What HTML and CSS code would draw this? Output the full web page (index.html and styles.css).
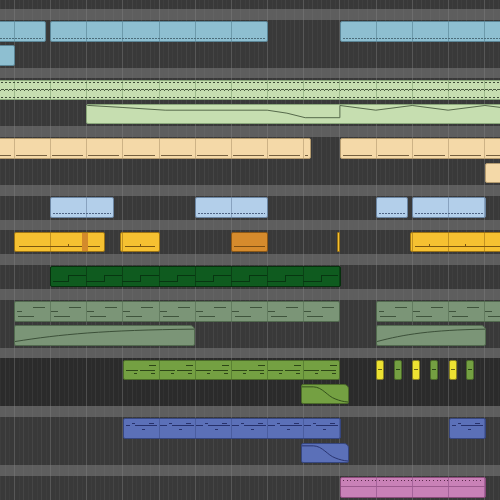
FILE: index.html
```html
<!DOCTYPE html>
<html>
<head>
<meta charset="utf-8">
<link rel="stylesheet" href="styles.css">
</head>
<body>
<div class="arr">
  <div class="top"></div>
  <div class="band"></div>
  <div class="lane">
    <div class="clip c-a" style="margin-left:-6px;width:52px"><i></i></div>
    <div class="clip c-a" style="margin-left:50px;width:218px"><i></i></div>
    <div class="clip c-a" style="margin-left:340px;width:166px"><i></i></div>
  </div>
  <div class="lane">
    <div class="clip c-a" style="margin-left:-6px;width:21px"></div>
  </div>
  <div class="band"></div>
  <div class="lane">
    <div class="clip c-b" style="margin-left:-6px;width:512px"><i class="n1"></i><i class="n2"></i><i class="n3"></i></div>
  </div>
  <div class="lane">
    <div class="clip auto c-b" style="margin-left:86px;width:420px">
      <svg viewBox="0 0 100 100" preserveAspectRatio="none"><path d="M0,2 L8.6,13.5 L18.7,28 L43.1,28 Q48,40 52.2,68.6 L60.5,68.6 L60.5,2.7 L69.1,28 L77.8,2.7 L86.4,28 L95.2,2.7 L100,16"/></svg>
    </div>
  </div>
  <div class="band"></div>
  <div class="lane">
    <div class="clip c-c" style="margin-left:-6px;width:317px"><i></i></div>
    <div class="clip c-c" style="margin-left:340px;width:166px"><i></i></div>
  </div>
  <div class="lane">
    <div class="clip c-c" style="margin-left:485px;width:21px"></div>
  </div>
  <div class="band"></div>
  <div class="lane">
    <div class="clip c-d" style="margin-left:50px;width:64px"><i></i></div>
    <div class="clip c-d" style="margin-left:195px;width:73px"><i></i></div>
    <div class="clip c-d" style="margin-left:376px;width:32px"><i></i></div>
    <div class="clip c-d" style="margin-left:412px;width:74px"><i></i></div>
  </div>
  <div class="band"></div>
  <div class="lane">
    <div class="clip c-e" style="margin-left:14px;width:91px"><i class="tk"></i><i class="ln"></i></div>
    <div class="clip c-s" style="margin-left:82px;width:6px"></div>
    <div class="clip c-e" style="margin-left:120px;width:40px"><i class="tk"></i><i class="ln"></i></div>
    <div class="clip c-o" style="margin-left:231px;width:37px"><i></i></div>
    <div class="clip c-e thin" style="margin-left:337px;width:3px"></div>
    <div class="clip c-e" style="margin-left:410px;width:96px"><i class="tk"></i><i class="ln"></i></div>
  </div>
  <div class="band"></div>
  <div class="lane">
    <div class="clip c-f" style="margin-left:50px;width:291px"><i class="hi"></i><i class="tk"></i><i class="lo"></i></div>
  </div>
  <div class="band"></div>
  <div class="lane">
    <div class="clip c-g" style="margin-left:14px;width:326px"><i class="g1"></i><i class="g2"></i><i class="g3"></i></div>
    <div class="clip c-g" style="margin-left:376px;width:130px"><i class="g1"></i><i class="g2"></i><i class="g3"></i></div>
  </div>
  <div class="lane">
    <div class="clip auto c-g" style="margin-left:14px;width:181px">
      <svg viewBox="0 0 100 100" preserveAspectRatio="none"><path d="M0,84 C25,45 50,22 100,17"/></svg>
    </div>
    <div class="clip auto c-g" style="margin-left:376px;width:110px">
      <svg viewBox="0 0 100 100" preserveAspectRatio="none"><path d="M0,84 C25,45 50,22 100,17"/></svg>
    </div>
  </div>
  <div class="band"></div>
  <div class="lane dk">
    <div class="clip c-h" style="margin-left:123px;width:217px"><i class="h1"></i><i class="h2"></i><i class="h3"></i></div>
    <div class="clip c-y" style="margin-left:376px;width:8px"><i></i></div>
    <div class="clip c-hs" style="margin-left:394px;width:8px"><i></i></div>
    <div class="clip c-y" style="margin-left:412px;width:8px"><i></i></div>
    <div class="clip c-hs" style="margin-left:430px;width:8px"><i></i></div>
    <div class="clip c-y" style="margin-left:449px;width:8px"><i></i></div>
    <div class="clip c-hs" style="margin-left:466px;width:8px"><i></i></div>
  </div>
  <div class="lane dk">
    <div class="clip auto c-h" style="margin-left:301px;width:48px">
      <svg viewBox="0 0 100 100" preserveAspectRatio="none"><path d="M0,10 L25,10 C45,12 55,60 72,75 C82,85 90,90 100,92"/></svg>
    </div>
  </div>
  <div class="band"></div>
  <div class="lane">
    <div class="clip c-i" style="margin-left:123px;width:218px"><i class="i1"></i><i class="i2"></i><i class="i3"></i></div>
    <div class="clip c-i" style="margin-left:449px;width:37px"><i class="i1"></i><i class="i2"></i><i class="i3"></i></div>
  </div>
  <div class="lane">
    <div class="clip auto c-i" style="margin-left:301px;width:48px">
      <svg viewBox="0 0 100 100" preserveAspectRatio="none"><path d="M0,10 L25,10 C45,12 55,60 72,75 C82,85 90,90 100,92"/></svg>
    </div>
  </div>
  <div class="band"></div>
  <div class="lane">
    <div class="clip c-j" style="margin-left:340px;width:146px"><i class="j1"></i><i class="j2"></i></div>
  </div>
</div>
</body>
</html>
```
FILE: styles.css
```css
html, body {
  margin: 0;
  padding: 0;
}
body {
  width: 500px;
  height: 500px;
  overflow: hidden;
  background: #393939;
  font-family: "Liberation Sans", sans-serif;
}
.arr {
  display: flex;
  flex-direction: column;
  width: 500px;
  height: 500px;
  overflow: hidden;
}
.top, .band, .lane {
  --bg: #393939;
  --bar: #575757;
  --beat: #454545;
  --sub: #3e3e3e;
  flex: none;
  display: grid;
  grid-template-columns: 500px;
  overflow: hidden;
  background:
    repeating-linear-gradient(90deg, var(--bar) 14px 15px, transparent 15px 50.15px),
    repeating-linear-gradient(90deg, var(--beat) 4.96px 5.96px, transparent 5.96px 14px),
    repeating-linear-gradient(90deg, var(--sub) 0.44px 1.44px, transparent 1.44px 4.96px),
    var(--bg);
}
.top { height: 9px; }
.band {
  height: 10.6px;
  --bg: #5e5e5e;
  --bar: #6d6d6d;
  --beat: #636363;
  --sub: #5e5e5e;
}
.lane { height: 24.05px; }
.lane.dk {
  --bg: #2b2b2b;
  --bar: #4e4e4e;
  --beat: #383838;
  --sub: #313131;
}

.clip {
  grid-area: 1 / 1;
  justify-self: start;
  align-self: start;
  margin-top: 1.5px;
  height: 20.5px;
  box-sizing: border-box;
  border: 1px solid var(--bd);
  border-radius: 2px;
  padding: 0 2px;
  display: flex;
  flex-direction: column;
  overflow: hidden;
  background: repeating-linear-gradient(90deg, var(--div) 14px 15px, transparent 15px 50.15px) fixed, var(--fill);
}
.clip > i {
  display: block;
  flex: none;
  height: 1px;
}
.clip.auto {
  padding: 0;
  border-radius: 2px 5px 2px 2px;
  background: var(--fill);
}
.clip.auto svg {
  display: block;
  width: 100%;
  height: 100%;
}
.clip.auto path {
  fill: none;
  stroke: var(--env);
  stroke-width: 1px;
  vector-effect: non-scaling-stroke;
}

/* blue */
.c-a { --fill: #8ebfd1; --bd: #5b8596; --div: #6c9aab; }
.c-a > i {
  margin-top: 16px;
  background: repeating-linear-gradient(90deg, #4b6c7a 0 2px, transparent 2px 3px);
}

/* light green */
.c-b { --fill: #c6deb0; --bd: #8aa77a; --div: #9ebb8c; --env: #56694b; }
.c-b > .n1 {
  margin-top: 1px;
  background: repeating-linear-gradient(90deg, #3f4c38 0 2px, transparent 2px 4px);
}
.c-b > .n2 {
  margin-top: 6.5px;
  height: 2px;
  background:
    repeating-linear-gradient(90deg, #4a5a40 0 3px, transparent 3px 4px) top / 100% 1px no-repeat,
    repeating-linear-gradient(90deg, transparent 0 3px, #4a5a40 3px 4px) bottom / 100% 1px no-repeat;
}
.c-b > .n3 {
  margin-top: 5.5px;
  background: repeating-linear-gradient(90deg, #3f4c38 0 2px, transparent 2px 4px);
}

/* tan */
.c-c { --fill: #f4d9a8; --bd: #b39a6e; --div: #cdb386; }
.c-c > i {
  margin-top: 16px;
  background: repeating-linear-gradient(90deg, transparent 14px 16px, #75603f 16px 47px, transparent 47px 50.15px) fixed;
}

/* light blue */
.c-d { --fill: #b3cfea; --bd: #6c86a3; --div: #88a2bf; }
.c-d > i {
  margin-top: 15px;
  background: repeating-linear-gradient(90deg, #4f6484 0 2px, transparent 2px 3px);
}

/* yellow */
.c-e { --fill: #f6c131; --bd: #9a7214; --div: #c39320; }
.c-e > .tk {
  margin-top: 11px;
  height: 2px;
  background: repeating-linear-gradient(90deg, transparent 14px 31.5px, #7a5610 31.5px 32.5px, transparent 32.5px 50.15px) fixed;
}
.c-e > .ln {
  margin: 0 2px;
  background: #7a5610;
}
.c-e.thin { padding: 0; border-radius: 1px; }
.c-s { --fill: #d38a2b; --bd: #9a7214; --div: #d38a2b; border-left: 0; border-right: 0; border-radius: 0; }
.c-o { --fill: #d68b2c; --bd: #8a5716; --div: #a8691f; }
.c-o > i {
  margin-top: 13px;
  background: #7b4d12;
}

/* dark green */
.c-f { --fill: #0f5b1f; --bd: #06300d; --div: #0a4115; }
.c-f > .hi {
  margin-top: 8px;
  background: repeating-linear-gradient(90deg, transparent 14px 32px, #073611 32px 50.15px) fixed;
}
.c-f > .tk {
  height: 5px;
  background: repeating-linear-gradient(90deg, transparent 14px 32px, #073611 32px 33px, transparent 33px 50.15px) fixed;
}
.c-f > .lo {
  background: repeating-linear-gradient(90deg, #073611 14px 33px, transparent 33px 50.15px) fixed;
}

/* sage */
.c-g { --fill: #7b9577; --bd: #526a4f; --div: #627b5f; --env: #3c5039; }
.c-g > .g1 {
  margin-top: 5px;
  background: repeating-linear-gradient(90deg, transparent 14px 33px, #3f543c 33px 45px, transparent 45px 50.15px) fixed;
}
.c-g > .g2 {
  margin-top: 3px;
  background: repeating-linear-gradient(90deg, transparent 14px 15px, #3f543c 15px 22px, transparent 22px 50.15px) fixed;
}
.c-g > .g3 {
  margin-top: 4px;
  background: repeating-linear-gradient(90deg, transparent 14px 18px, #3f543c 18px 34px, transparent 34px 50.15px) fixed;
}

/* olive */
.c-h, .c-hs { --fill: #74a042; --bd: #4b6a29; --div: #5a8133; --env: #34501d; }
.c-h > .h1 {
  margin-top: 4px;
  background: repeating-linear-gradient(90deg, transparent 14px 41px, #2d4517 41px 48px, transparent 48px 50.15px) fixed;
}
.c-h > .h2 {
  margin-top: 4px;
  background: repeating-linear-gradient(90deg, transparent 14px 15px, #2d4517 15px 30px, transparent 30px 32px, #2d4517 32px 47px, transparent 47px 50.15px) fixed;
}
.c-h > .h3 {
  margin-top: 2px;
  background: repeating-linear-gradient(90deg, transparent 14px 26px, #2d4517 26px 29px, transparent 29px 43px, #2d4517 43px 47px, transparent 47px 50.15px) fixed;
}
.c-y { --fill: #ede232; --bd: #8a8220; --div: #ede232; padding: 0 1px; }
.c-hs { padding: 0 1px; }
.c-y > i, .c-hs > i { margin-top: 8px; }
.c-y > i { background: #6a6418; }
.c-hs > i { background: #2d4517; }

/* blue violet */
.c-i { --fill: #5b70b8; --bd: #36467f; --div: #4a5d9f; --env: #2a3570; }
.c-i > .i1 {
  margin-top: 4px;
  background: repeating-linear-gradient(90deg, transparent 14px 24px, #27316b 24px 27px, transparent 27px 41px, #27316b 41px 46px, transparent 46px 50.15px) fixed;
}
.c-i > .i2 {
  margin-top: 1px;
  background: repeating-linear-gradient(90deg, transparent 14px 15px, #27316b 15px 22px, transparent 22px 27px, #27316b 27px 49px, transparent 49px 50.15px) fixed;
}
.c-i > .i3 {
  margin-top: 3px;
  background: repeating-linear-gradient(90deg, transparent 14px 34px, #27316b 34px 37px, transparent 37px 50.15px) fixed;
}

/* pink */
.c-j { --fill: #c981b7; --bd: #8b4b7b; --div: #a5639a; }
.c-j > .j1 {
  margin-top: 2px;
  background: repeating-linear-gradient(90deg, #5a2a4a 0 1px, transparent 1px 3.6px);
}
.c-j > .j2 {
  margin: 5px -2px 0;
  background: #9c5a8e;
}
```
